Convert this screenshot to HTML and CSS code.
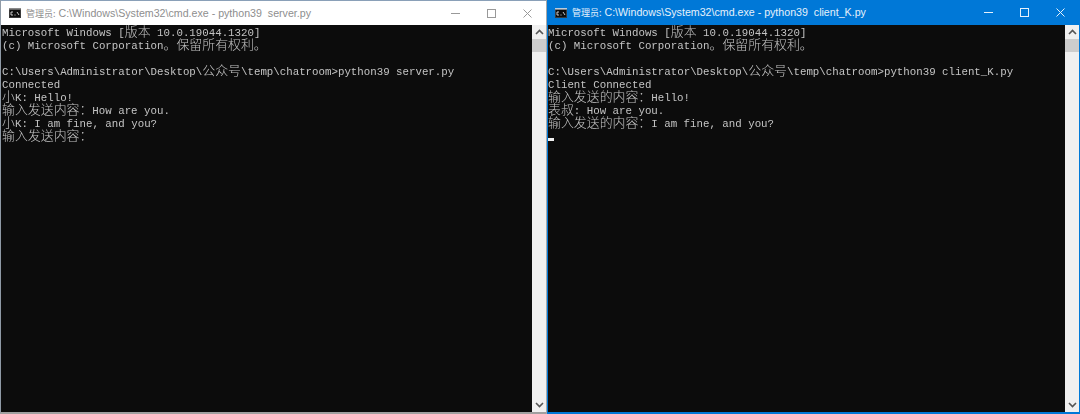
FILE: index.html
```html
<!DOCTYPE html>
<html lang="zh-CN">
<head>
<meta charset="utf-8">
<title>cmd</title>
<link rel="stylesheet" href="styles.css">
</head>
<body>
<div class="desktop">
  <section class="window inactive">
    <header class="titlebar">
      <svg class="appicon" viewBox="0 0 12 10" width="12" height="10"><rect width="12" height="10" fill="#3a3a3a"/><rect width="12" height="1.5" fill="#8a8a8a"/><rect x="1" y="2" width="10" height="7" fill="#0c0c0c"/><path d="M4 4H2v3h2M5.5 7h1M8 4l2 3" stroke="#ddd" stroke-width=".9" fill="none"/></svg>
      <span class="title"><span class="cn">管理员:</span> C:\Windows\System32\cmd.exe - python39&nbsp; server.py</span>
      <div class="controls">
        <svg viewBox="0 0 9 9" width="9" height="9"><path d="M0 4.5h9" stroke="currentColor" fill="none"/></svg>
        <svg viewBox="0 0 9 9" width="9" height="9"><rect x=".5" y=".5" width="8" height="8" stroke="currentColor" fill="none"/></svg>
        <svg viewBox="0 0 9 9" width="9" height="9"><path d="M.5.5l8 8M8.500.5l-8 8" stroke="currentColor" fill="none"/></svg>
      </div>
    </header>
    <div class="body">
      <div class="console">
        <div class="line">Microsoft Windows [<span class="cn">版本</span> 10.0.19044.1320]</div>
        <div class="line">(c) Microsoft Corporation<span class="cn">。保留所有权利。</span></div>
        <div class="line"></div>
        <div class="line">C:\Users\Administrator\Desktop\<span class="cn">公众号</span>\temp\chatroom&gt;python39 server.py</div>
        <div class="line">Connected</div>
        <div class="line"><span class="cn">小</span>K: Hello!</div>
        <div class="line"><span class="cn">输入发送内容：</span>How are you.</div>
        <div class="line"><span class="cn">小</span>K: I am fine, and you?</div>
        <div class="line"><span class="cn">输入发送内容：</span></div>
      </div>
      <div class="scrollbar">
        <svg viewBox="0 0 9 6" width="9" height="6"><path d="M1 5l3.500-3.500L8 5" stroke="#555" stroke-width="1.6" fill="none"/></svg>
        <div class="thumb"></div>
        <svg class="down" viewBox="0 0 9 6" width="9" height="6"><path d="M1 1l3.500 3.500L8 1" stroke="#555" stroke-width="1.6" fill="none"/></svg>
      </div>
    </div>
  </section>
  <section class="window active">
    <header class="titlebar">
      <svg class="appicon" viewBox="0 0 12 10" width="12" height="10"><rect width="12" height="10" fill="#3a3a3a"/><rect width="12" height="1.5" fill="#bcd"/><rect x="1" y="2" width="10" height="7" fill="#0c0c0c"/><path d="M4 4H2v3h2M5.5 7h1M8 4l2 3" stroke="#ddd" stroke-width=".9" fill="none"/></svg>
      <span class="title"><span class="cn">管理员:</span> C:\Windows\System32\cmd.exe - python39&nbsp; client_K.py</span>
      <div class="controls">
        <svg viewBox="0 0 9 9" width="9" height="9"><path d="M0 4.5h9" stroke="currentColor" fill="none"/></svg>
        <svg viewBox="0 0 9 9" width="9" height="9"><rect x=".5" y=".5" width="8" height="8" stroke="currentColor" fill="none"/></svg>
        <svg viewBox="0 0 9 9" width="9" height="9"><path d="M.5.5l8 8M8.500.5l-8 8" stroke="currentColor" fill="none"/></svg>
      </div>
    </header>
    <div class="body">
      <div class="console">
        <div class="line">Microsoft Windows [<span class="cn">版本</span> 10.0.19044.1320]</div>
        <div class="line">(c) Microsoft Corporation<span class="cn">。保留所有权利。</span></div>
        <div class="line"></div>
        <div class="line">C:\Users\Administrator\Desktop\<span class="cn">公众号</span>\temp\chatroom&gt;python39 client_K.py</div>
        <div class="line">Client Connected</div>
        <div class="line"><span class="cn">输入发送的内容：</span>Hello!</div>
        <div class="line"><span class="cn">表叔</span>: How are you.</div>
        <div class="line"><span class="cn">输入发送的内容：</span>I am fine, and you?</div>
        <div class="line"></div>
        <div class="cursor"></div>
      </div>
      <div class="scrollbar">
        <svg viewBox="0 0 9 6" width="9" height="6"><path d="M1 5l3.500-3.500L8 5" stroke="#555" stroke-width="1.6" fill="none"/></svg>
        <div class="thumb"></div>
        <svg class="down" viewBox="0 0 9 6" width="9" height="6"><path d="M1 1l3.500 3.500L8 1" stroke="#555" stroke-width="1.6" fill="none"/></svg>
      </div>
    </div>
  </section>
</div>
</body>
</html>
```
FILE: styles.css
```css
* { box-sizing: border-box; }
html, body { margin: 0; height: 100%; background: #fff; overflow: hidden; }
.desktop { display: flex; height: 414px; width: 1080px; gap: 1px; background: #a8a8a8; }
.window { display: flex; flex-direction: column; min-width: 0; flex: none; }
.inactive { width: 546px; border-left: 1px solid #8f9aa6; border-bottom: 2px solid #a0a0a0; }
.active { width: 533px; background: #0078d7; border: 1px solid #0078d7; border-top: 0; border-bottom-width: 2px; }
.titlebar { display: flex; align-items: center; height: 25px; flex: none; font: 10.65px "Liberation Sans", "Noto Sans CJK SC", sans-serif; }
.inactive .titlebar { background: #fff; color: #8e8e8e; border-top: 1px solid #8aa0b8; padding-left: 8px; }
.active .titlebar { background: #0078d7; color: #e6f1fb; padding-left: 7px; }
.appicon { flex: none; margin-right: 5px; }
.title { white-space: pre; flex: 1; }
.title .cn { font-size: 9px; }
.cn { font-family: "Noto Sans CJK SC", sans-serif; }
.controls { display: flex; gap: 27px; align-items: center; }
.inactive .controls { color: #999; margin-right: 14px; }
.active .controls { margin-right: 14px; }
.body { display: flex; flex: 1; min-height: 0; background: #0c0c0c; }
.console { flex: 1; min-width: 0; padding: 2px 0 0 1px; color: #c4c4c4; font: 10.77px/13px "Liberation Mono", monospace; filter: blur(0.3px); overflow: hidden; }
.active .console { padding-left: 0; }
.line { height: 13px; white-space: pre; }
.console .cn { font-size: 12.92px; line-height: 0; font-weight: 300; }
.cursor { width: 6px; height: 3px; margin-top: -6px; background: #f0f0f0; }
.scrollbar { display: flex; flex-direction: column; align-items: center; width: 14px; flex: none; background: #f0f0f0; padding-top: 4px; }
.thumb { width: 100%; height: 13px; margin-top: 4px; background: #cdcdcd; }
.down { margin-top: auto; margin-bottom: 4px; }
```
